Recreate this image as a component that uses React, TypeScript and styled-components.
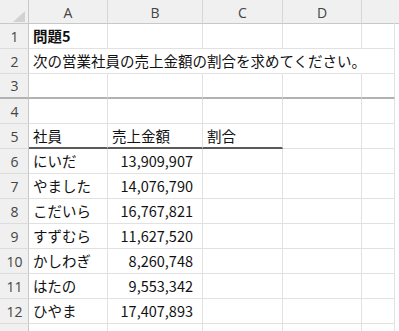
import React from "react";
import styled, { createGlobalStyle } from "styled-components";

const Global = createGlobalStyle`
  html, body { margin: 0; padding: 0; background: #ffffff; }
  body { width: 399px; height: 331px; overflow: hidden; }
`;

const COLS = [29, 79, 95, 80, 79, 33];
const LETTERS = ["A", "B", "C", "D", ""];

const Sheet = styled.div`
  display: grid;
  grid-template-columns: ${COLS.map((c) => c + "px").join(" ")} 1fr;
  grid-auto-rows: 25px;
  grid-template-rows: 24px;
  width: 399px;
  background: #ffffff;
  font-family: "Noto Sans CJK JP", "Noto Sans", sans-serif;
`;

const Corner = styled.div`
  box-sizing: border-box;
  background: #f0f0f0;
  border-right: 1px solid #c8c8c8;
  border-bottom: 1px solid #c8c8c8;
  display: flex;
  align-items: flex-end;
  justify-content: flex-end;
  padding: 0 3px 1px 0;
`;

const ColHead = styled.div<{ $last?: boolean }>`
  box-sizing: border-box;
  background: #f0f0f0;
  border-right: 1px solid ${(p) => (p.$last ? "transparent" : "#d6d6d6")};
  border-bottom: 1px solid #c8c8c8;
  display: flex;
  align-items: center;
  justify-content: center;
  font-family: "Open Sans", "Noto Sans", sans-serif;
  font-size: 14px;
  color: #444444;
  padding-top: 1px;
`;

const RowHead = styled.div<{ $freeze?: boolean }>`
  box-sizing: border-box;
  background: #f0f0f0;
  border-right: 1px solid #c8c8c8;
  border-bottom: ${(p) => (p.$freeze ? "2px solid #b2b2b2" : "1px solid #dcdcdc")};
  display: flex;
  align-items: center;
  justify-content: center;
  font-family: "Open Sans", "Noto Sans", sans-serif;
  font-size: 14px;
  color: #444444;
  padding-left: 1px;
`;

const Cell = styled.div<{
  $freeze?: boolean;
  $underline?: boolean;
  $noRight?: boolean;
  $align?: "left" | "right";
  $bold?: boolean;
}>`
  box-sizing: border-box;
  position: relative;
  border-right: 1px solid ${(p) => (p.$noRight ? "transparent" : "#e1e1e1")};
  border-bottom: ${(p) =>
    p.$freeze
      ? "2px solid #b2b2b2"
      : p.$underline
      ? "2px solid #5a5a5a"
      : "1px solid #e1e1e1"};
  display: flex;
  align-items: center;
  justify-content: ${(p) => (p.$align === "right" ? "flex-end" : "flex-start")};
  padding: 0 ${(p) => (p.$align === "right" ? "9px" : "0")} 1px
    ${(p) => (p.$align === "right" ? "0" : "4px")};
  font-size: 14.5px;
  font-weight: ${(p) => (p.$bold ? 700 : 400)};
  color: #111111;
  white-space: nowrap;
  overflow: visible;
`;

const Filler = styled.div<{ $head?: boolean; $freeze?: boolean }>`
  box-sizing: border-box;
  background: ${(p) => (p.$head ? "#f0f0f0" : "#ffffff")};
  border-bottom: ${(p) =>
    p.$head ? "1px solid #c8c8c8" : "none"};
`;

type Row = (string | null)[];

const rows: Row[] = [
  ["問題5", null, null, null],
  ["次の営業社員の売上金額の割合を求めてください。", null, null, null],
  [null, null, null, null],
  [null, null, null, null],
  ["社員", "売上金額", "割合", null],
  ["にいだ", "13,909,907", null, null],
  ["やました", "14,076,790", null, null],
  ["こだいら", "16,767,821", null, null],
  ["すずむら", "11,627,520", null, null],
  ["かしわぎ", "8,260,748", null, null],
  ["はたの", "9,553,342", null, null],
  ["ひやま", "17,407,893", null, null],
  [null, null, null, null],
];

const CornerMark = () => (
  <svg width="12" height="11" viewBox="0 0 12 11">
    <polygon points="12,0 12,11 0,11" fill="#d2d2d2" />
  </svg>
);

export default function App() {
  return (
    <>
      <Global />
      <Sheet>
        <Corner>
          <CornerMark />
        </Corner>
        {LETTERS.map((l, i) => (
          <ColHead key={i} $last={i === LETTERS.length - 1}>
            {l}
          </ColHead>
        ))}
        <Filler $head />
        {rows.map((r, ri) => {
          const n = ri + 1;
          const freeze = n === 3;
          const overflowRow = n === 2;
          return (
            <React.Fragment key={n}>
              <RowHead $freeze={freeze}>{n}</RowHead>
              {[0, 1, 2, 3, 4].map((ci) => {
                const v = ci < 4 ? r[ci] : null;
                const isNum = n >= 6 && n <= 12 && ci === 1;
                return (
                  <Cell
                    key={ci}
                    $freeze={freeze}
                    $underline={n === 5 && ci <= 2}
                    $noRight={overflowRow && ci <= 3}
                    $align={isNum ? "right" : "left"}
                    $bold={n === 1 && ci === 0}
                  >
                    {v}
                  </Cell>
                );
              })}
              <Filler $freeze={freeze} />
            </React.Fragment>
          );
        })}
      </Sheet>
    </>
  );
}
